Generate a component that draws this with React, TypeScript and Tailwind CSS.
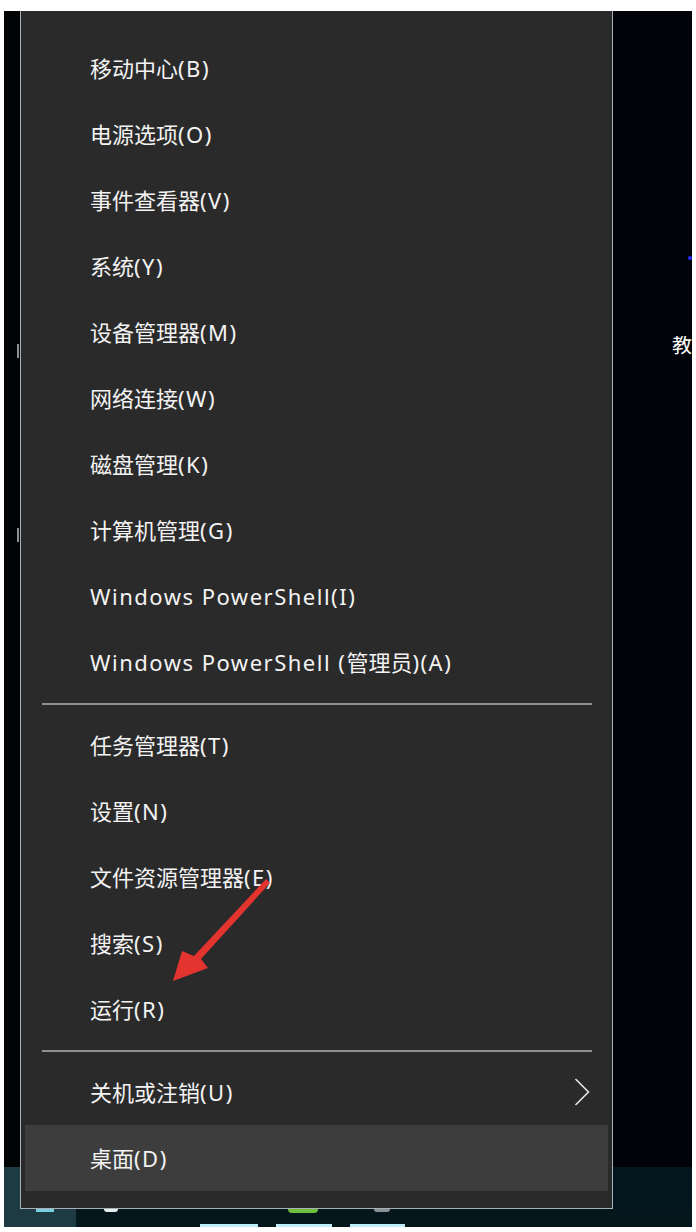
import React from "react";

const groupA = [
  "移动中心(B)",
  "电源选项(O)",
  "事件查看器(V)",
  "系统(Y)",
  "设备管理器(M)",
  "网络连接(W)",
  "磁盘管理(K)",
  "计算机管理(G)",
  "Windows PowerShell(I)",
  "Windows PowerShell (管理员)(A)",
];
const groupB = ["任务管理器(T)", "设置(N)", "文件资源管理器(E)", "搜索(S)", "运行(R)"];

const font = { fontFamily: '"Noto Sans", "Noto Sans CJK SC", sans-serif' };

function Label({ text }: { text: string }) {
  const parts = text.split(/([\u4e00-\u9fff]+)/);
  return (
    <span className="whitespace-pre leading-none text-[#f3f3f3]" style={font}>
      {parts.map((p, i) =>
        i % 2 === 1 ? (
          <span key={i} className="text-[22px]">
            {p}
          </span>
        ) : (
          <span key={i} className="text-[22px] tracking-[1.5px]">
            {p}
          </span>
        )
      )}
    </span>
  );
}

function Item({ label, active, chevron }: { label: string; active?: boolean; chevron?: boolean }) {
  return (
    <div
      className={`flex h-[66px] items-center justify-between pr-[20px] ${
        active ? "mx-[4px] bg-[#3d3d3d] pl-[65px]" : "pl-[69px]"
      }`}
    >
      <Label text={label} />
      {chevron && (
        <svg width="16" height="28" viewBox="0 0 16 28" className="mr-[2px] shrink-0">
          <polyline points="1.5,1 14.5,14 1.5,27" fill="none" stroke="#e6e6e6" strokeWidth="1.6" />
        </svg>
      )}
    </div>
  );
}

function Sep() {
  return (
    <div className="pl-[21px] pr-[20px] pt-[8px] pb-[7px]">
      <div className="h-[2px] bg-[#8d8f90]" />
    </div>
  );
}

export default function App() {
  return (
    <div className="relative h-[1232px] w-[696px] overflow-hidden bg-white pl-[4px] pr-[4px] pt-[11px] pb-[5px]">
      <div className="flex h-full flex-col">
        <div className="flex flex-1">
          <div className="flex w-[16px] flex-col">
            <div className="flex flex-1 flex-col items-end gap-[170px] bg-[#020305] pr-[1px] pt-[333px]">
              <div className="h-[14px] w-[2px] bg-[#8a8f93]" />
              <div className="h-[14px] w-[2px] bg-[#8a8f93]" />
            </div>
            <div className="h-[42px] bg-[#1e3a42]" />
          </div>
          <div className="w-[593px] border-x-[1.5px] border-b-[1.5px] border-[#a7b0b4] bg-[#2a2a2a]">
            <div className="h-[24px]" />
            {groupA.map((l) => (
              <Item key={l} label={l} />
            ))}
            <Sep />
            {groupB.map((l) => (
              <Item key={l} label={l} />
            ))}
            <Sep />
            <Item label="关机或注销(U)" chevron />
            <Item label="桌面(D)" active />
            <div className="h-[16px]" />
          </div>
          <div className="flex flex-1 flex-col">
            <div className="flex flex-1 flex-col items-end bg-[#020308] pt-[245px]">
              <div className="h-[4px] w-[4px] rounded-full bg-[#2a2aff]" />
              <div
                className="mt-[76px] w-[20px] overflow-hidden whitespace-nowrap text-[20px] leading-none text-white"
                style={font}
              >
                教
              </div>
            </div>
            <div className="h-[42px] bg-[#04161d]" />
          </div>
        </div>
        <div className="flex h-[18px]">
          <div className="flex w-[72px] items-start bg-[#1e3a42] pl-[32px]">
            <div className="h-[3px] w-[18px] bg-[#7ad0e0]" />
          </div>
          <div className="flex flex-1 flex-col justify-between bg-[#05161c]">
            <div className="flex items-start pl-[28px]">
              <div className="h-[3px] w-[14px] rounded-b-full bg-[#e8eef0]" />
              <div className="ml-[170px] h-[4px] w-[30px] rounded-b-full bg-[#6fbf3c]" />
              <div className="ml-[56px] h-[3px] w-[16px] rounded-b-full bg-[#8c9196]" />
            </div>
            <div className="flex gap-[18px] pl-[124px]">
              <div className="h-[3px] w-[58px] bg-[#bfeffa]" />
              <div className="h-[3px] w-[56px] bg-[#bfeffa]" />
              <div className="h-[3px] w-[55px] bg-[#bfeffa]" />
            </div>
          </div>
        </div>
      </div>

      {/* red arrow annotation overlay */}
      <svg className="pointer-events-none absolute left-0 top-0" width="696" height="1232" viewBox="0 0 696 1232">
        <polygon points="266,879 270,883 201,959 208,968 173,981 182,951 194,956" fill="#e3342f" />
      </svg>
    </div>
  );
}
